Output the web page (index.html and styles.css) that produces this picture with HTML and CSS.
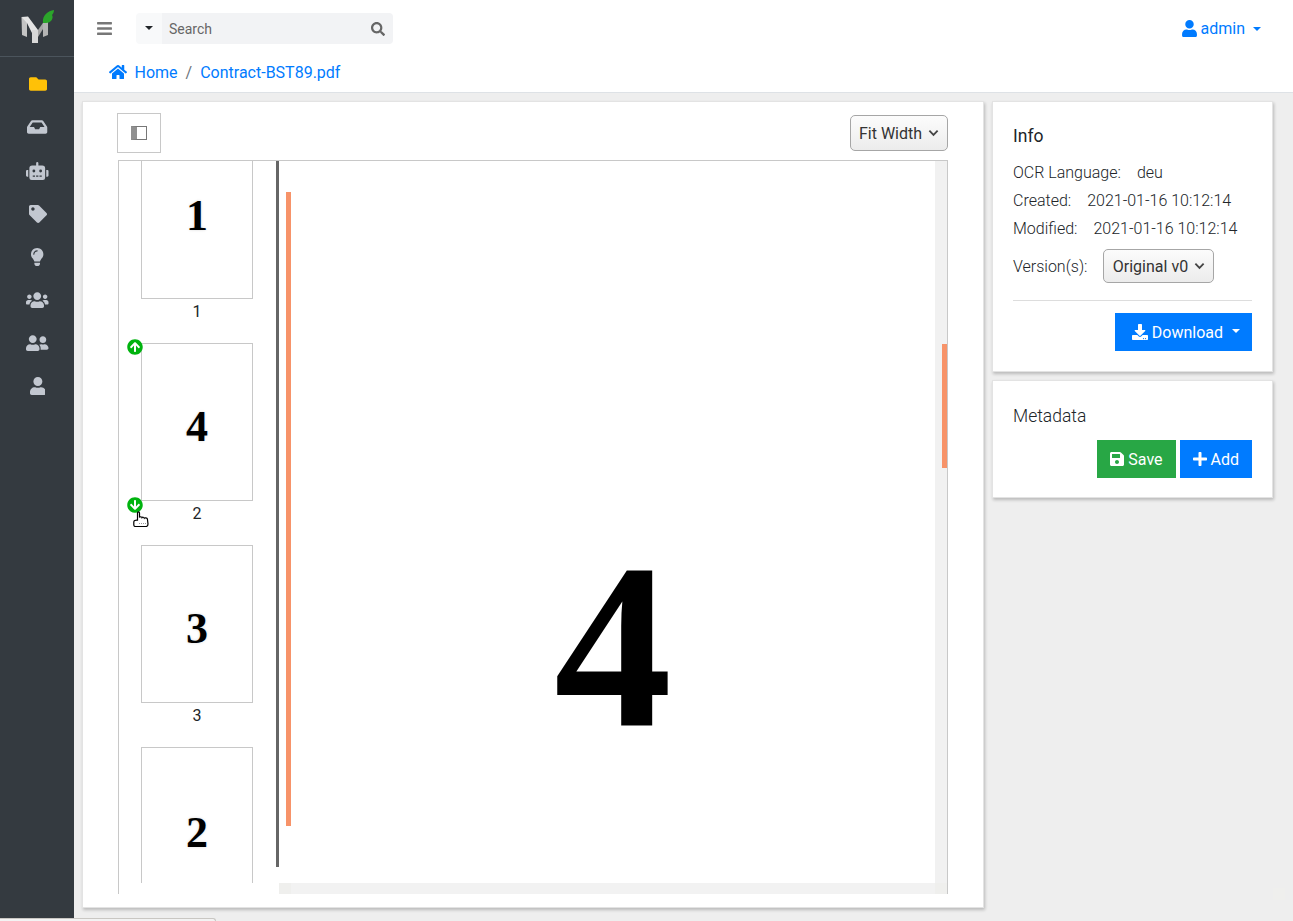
FILE: index.html
```html
<!DOCTYPE html>
<html>
<head>
    <meta name="viewport" content="width=device-width, initial-scale=1.0">
    <title>Contract-BST89.pdf</title>
    <link rel="stylesheet" href="styles.css">
</head>
<body>
    <div class="app">
        <aside class="sidebar">
            <div class="brand">
                <svg class="logo" viewBox="0 0 33 34" width="33" height="34">
                    <polygon points="0.5,8 6,11 6,28 1,26" fill="#c4c4c4"/>
                    <polygon points="0.5,8 7,7.5 17,21 11,24 6,14" fill="#e4e4e4"/>
                    <polygon points="11,21 17,21 17,34 11,34" fill="#d8d8d8"/>
                    <polygon points="17,21 24,11 27,12 17,28" fill="#a6a6a6"/>
                    <polygon points="22,13 27,12 27,26 22,28" fill="#b4b4b4"/>
                    <path d="M22 14 C21 6 27 2 33 1 C33 3 32 5 31 6 C33 9 30 14 25 14 Z" fill="#2ba52a"/>
                </svg>
            </div>
            <nav class="side-nav">
                <a class="active"><svg viewBox="0 0 512 512"><path d="M464 128H272l-64-64H48C21.49 64 0 85.49 0 112v288c0 26.51 21.49 48 48 48h416c26.51 0 48-21.49 48-48V176c0-26.51-21.49-48-48-48z"/></svg></a>
                <a><svg viewBox="0 0 576 512"><path d="M567.938 243.908L462.25 85.374A48.003 48.003 0 0 0 422.311 64H153.689a48 48 0 0 0-39.938 21.374L8.062 243.908A47.994 47.994 0 0 0 0 270.533V400c0 26.51 21.49 48 48 48h480c26.51 0 48-21.49 48-48V270.533a47.994 47.994 0 0 0-8.062-26.625zM162.252 128h251.497l85.333 128H376l-32 64H232l-32-64H76.918l85.334-128z"/></svg></a>
                <a><svg viewBox="0 0 640 512"><path d="M32,224H64V416H32A31.96166,31.96166,0,0,1,0,384V256A31.96166,31.96166,0,0,1,32,224Zm512-48V448a64.06328,64.06328,0,0,1-64,64H160a64.06328,64.06328,0,0,1-64-64V176a79.974,79.974,0,0,1,80-80H288V32a32,32,0,0,1,64,0V96H464A79.974,79.974,0,0,1,544,176ZM264,256a40,40,0,1,0-40,40A39.997,39.997,0,0,0,264,256Zm-8,128H192v32h64Zm96,0H288v32h64ZM456,256a40,40,0,1,0-40,40A39.997,39.997,0,0,0,456,256Zm-8,128H384v32h64ZM640,256V384a31.96166,31.96166,0,0,1-32,32H576V224h32A31.96166,31.96166,0,0,1,640,256Z"/></svg></a>
                <a><svg viewBox="0 0 512 512"><path d="M0 252.118V48C0 21.49 21.49 0 48 0h204.118a48 48 0 0 1 33.941 14.059l211.882 211.882c18.745 18.745 18.745 49.137 0 67.882L293.823 497.941c-18.745 18.745-49.137 18.745-67.882 0L14.059 286.059A48 48 0 0 1 0 252.118zM112 64c-26.51 0-48 21.49-48 48s21.49 48 48 48 48-21.49 48-48-21.49-48-48-48z"/></svg></a>
                <a><svg viewBox="0 0 352 512"><path d="M96.06 454.35c.01 6.29 1.87 12.45 5.36 17.69l17.09 25.69a31.99 31.99 0 0 0 26.64 14.28h61.71a31.99 31.99 0 0 0 26.64-14.28l17.09-25.69a31.989 31.989 0 0 0 5.36-17.69l.04-38.35H96.01l.05 38.35zM0 176c0 44.37 16.45 84.85 43.56 115.78 16.52 18.85 42.36 58.23 52.21 91.45.04.26.07.52.11.78h160.24c.04-.26.07-.51.11-.78 9.85-33.22 35.69-72.6 52.21-91.45C335.55 260.85 352 220.37 352 176 352 78.61 272.91-.3 175.45 0 73.44.31 0 82.97 0 176zm176-80c-44.11 0-80 35.89-80 80 0 8.84-7.16 16-16 16s-16-7.16-16-16c0-61.76 50.24-112 112-112 8.84 0 16 7.16 16 16s-7.16 16-16 16z"/></svg></a>
                <a><svg viewBox="0 0 640 512"><path d="M96 224c35.3 0 64-28.7 64-64s-28.7-64-64-64-64 28.7-64 64 28.7 64 64 64zm448 0c35.3 0 64-28.7 64-64s-28.7-64-64-64-64 28.7-64 64 28.7 64 64 64zm32 32h-64c-17.6 0-33.5 7.1-45.1 18.6 40.3 22.1 68.9 62 75.1 109.4h66c17.7 0 32-14.3 32-32v-32c0-35.3-28.7-64-64-64zm-256 0c61.9 0 112-50.1 112-112S381.9 32 320 32 208 82.1 208 144s50.1 112 112 112zm76.8 32h-8.3c-20.8 10-43.9 16-68.5 16s-47.6-6-68.5-16h-8.3C179.6 288 128 339.6 128 403.2V432c0 26.5 21.5 48 48 48h288c26.5 0 48-21.5 48-48v-28.8c0-63.6-51.6-115.2-115.2-115.2zm-223.7-13.4C161.5 263.1 145.6 256 128 256H64c-35.3 0-64 28.7-64 64v32c0 17.7 14.3 32 32 32h65.9c6.3-47.4 34.9-87.3 75.2-109.4z"/></svg></a>
                <a><svg viewBox="0 0 640 512"><path d="M192 256c61.9 0 112-50.1 112-112S253.9 32 192 32 80 82.1 80 144s50.1 112 112 112zm76.8 32h-8.3c-20.8 10-43.9 16-68.5 16s-47.6-6-68.5-16h-8.3C51.6 288 0 339.6 0 403.2V432c0 26.5 21.5 48 48 48h288c26.5 0 48-21.5 48-48v-28.8c0-63.6-51.6-115.2-115.2-115.2zM480 256c53 0 96-43 96-96s-43-96-96-96-96 43-96 96 43 96 96 96zm48 32h-3.8c-13.9 4.8-28.6 8-44.2 8s-30.3-3.2-44.2-8H432c-20.4 0-39.2 5.9-55.7 15.4 24.4 26.3 39.7 61.2 39.7 99.8v38.4c0 2.2-.5 4.3-.6 6.4H592c26.5 0 48-21.5 48-48 0-61.9-50.1-112-112-112z"/></svg></a>
                <a><svg viewBox="0 0 448 512"><path d="M224 256c70.7 0 128-57.3 128-128S294.7 0 224 0 96 57.3 96 128s57.3 128 128 128zm89.6 32h-16.7c-22.2 10.2-46.9 16-72.9 16s-50.6-5.8-72.9-16h-16.7C60.2 288 0 348.2 0 422.4V464c0 26.5 21.5 48 48 48h352c26.5 0 48-21.5 48-48v-41.6c0-74.2-60.2-134.4-134.4-134.4z"/></svg></a>
            </nav>
        </aside>

        <div class="page">
            <header class="topbar">
                <div class="topbar-row">
                    <svg class="menu-icon" viewBox="0 0 448 512"><path d="M16 132h416c8.837 0 16-7.163 16-16V76c0-8.837-7.163-16-16-16H16C7.163 60 0 67.163 0 76v40c0 8.837 7.163 16 16 16zm0 160h416c8.837 0 16-7.163 16-16v-40c0-8.837-7.163-16-16-16H16c-8.837 0-16 7.163-16 16v40c0 8.837 7.163 16 16 16zm0 160h416c8.837 0 16-7.163 16-16v-40c0-8.837-7.163-16-16-16H16c-8.837 0-16 7.163-16 16v40c0 8.837 7.163 16 16 16z"/></svg>
                    <div class="search">
                        <div class="search-drop"><span class="caret caret-dark"></span></div>
                        <div class="search-input">
                            <span>Search</span>
                            <svg viewBox="0 0 512 512"><path d="M505 442.7L405.3 343c-4.5-4.5-10.6-7-17-7H372c27.6-35.3 44-79.7 44-128C416 93.1 322.9 0 208 0S0 93.1 0 208s93.1 208 208 208c48.3 0 92.7-16.4 128-44v16.3c0 6.4 2.5 12.5 7 17l99.7 99.7c9.4 9.4 24.6 9.4 33.9 0l28.3-28.3c9.4-9.4 9.4-24.6.1-34zM208 336c-70.7 0-128-57.2-128-128 0-70.7 57.2-128 128-128 70.7 0 128 57.2 128 128 0 70.7-57.2 128-128 128z"/></svg>
                        </div>
                    </div>
                    <a class="user-menu">
                        <svg viewBox="0 0 448 512"><path d="M224 256c70.7 0 128-57.3 128-128S294.7 0 224 0 96 57.3 96 128s57.3 128 128 128zm89.6 32h-16.7c-22.2 10.2-46.9 16-72.9 16s-50.6-5.8-72.9-16h-16.7C60.2 288 0 348.2 0 422.4V464c0 26.5 21.5 48 48 48h352c26.5 0 48-21.5 48-48v-41.6c0-74.2-60.2-134.4-134.4-134.4z"/></svg>
                        <span>admin</span>
                        <span class="caret"></span>
                    </a>
                </div>
                <div class="breadcrumb">
                    <svg viewBox="0 0 576 512"><path d="M280.37 148.26L96 300.11V464a16 16 0 0 0 16 16l112.06-.29a16 16 0 0 0 15.92-16V368a16 16 0 0 1 16-16h64a16 16 0 0 1 16 16v95.64a16 16 0 0 0 16 16.05L464 480a16 16 0 0 0 16-16V300L295.67 148.26a12.19 12.19 0 0 0-15.3 0zM571.6 251.47L488 182.56V44.05a12 12 0 0 0-12-12h-56a12 12 0 0 0-12 12v72.61L318.47 43a48 48 0 0 0-61 0L4.34 251.47a12 12 0 0 0-1.6 16.9l25.5 31A12 12 0 0 0 45.15 301l235.22-193.74a12.19 12.19 0 0 1 15.3 0L530.9 301a12 12 0 0 0 16.9-1.6l25.5-31a12 12 0 0 0-1.7-16.93z"/></svg>
                    <a>Home</a>
                    <span class="crumb-sep">/</span>
                    <a>Contract-BST89.pdf</a>
                </div>
            </header>

            <main class="content">
                <section class="card doc-card">
                    <div class="doc-toolbar">
                        <button class="sidebar-toggle"><span class="toggle-glyph"></span></button>
                        <div class="select-box fit-select">Fit Width <svg class="chevron" viewBox="0 0 12 8"><path d="M1.5 1.5 L6 6 L10.5 1.5" /></svg></div>
                    </div>
                    <div class="viewer">
                        <div class="thumbs">
                            <div class="thumb thumb-first">
                                <div class="thumb-page">1</div>
                                <div class="thumb-label">1</div>
                            </div>
                            <div class="thumb">
                                <div class="thumb-page">4</div>
                                <div class="thumb-label">2</div>
                                <svg class="move-badge move-up" viewBox="0 0 512 512"><path d="M8 256C8 119 119 8 256 8s248 111 248 248-111 248-248 248S8 393 8 256zm143.6 28.9l72.4-75.5V392c0 13.3 10.7 24 24 24h16c13.3 0 24-10.7 24-24V209.4l72.4 75.5c9.3 9.7 24.8 9.9 34.3.4l10.9-11c9.4-9.4 9.4-24.6 0-33.9L273 107.7c-9.4-9.4-24.6-9.4-33.9 0L106.3 240.4c-9.4 9.4-9.4 24.6 0 33.9l10.9 11c9.6 9.5 25.1 9.3 34.4-.4z"/></svg>
                                <svg class="move-badge move-down" viewBox="0 0 512 512"><path d="M504 256c0 137-111 248-248 248S8 393 8 256 119 8 256 8s248 111 248 248zM360.4 227.1L288 302.6V120c0-13.3-10.7-24-24-24h-16c-13.3 0-24 10.7-24 24v182.6l-72.4-75.5c-9.3-9.7-24.8-9.9-34.3-.4l-10.9 11c-9.4 9.4-9.4 24.6 0 33.9L239 404.3c9.4 9.4 24.6 9.4 33.9 0l132.7-132.7c9.4-9.4 9.4-24.6 0-33.9l-10.9-11c-9.5-9.5-25-9.3-34.3.4z"/></svg>
                                <svg class="hand-cursor" viewBox="0 0 16 16"><path d="M4.5 2 C4.5 .6 6.5 .6 6.5 2 V6.5 C7 5.5 8.7 5.5 9 6.7 C9.5 6 11 6 11.3 7.2 C11.8 6.6 14 6.6 14.4 8 L15 13 C15 14.5 14 15.5 13 15.5 H2.5 C1.5 15.5 .8 15 .8 14 V11 C.8 9.8 2 9 4.5 9.2 Z" fill="#fff" stroke="#000" stroke-width="1.2"/><path d="M6 12.5 H13" stroke="#999" stroke-width="1" stroke-dasharray="1 1"/></svg>
                            </div>
                            <div class="thumb">
                                <div class="thumb-page">3</div>
                                <div class="thumb-label">3</div>
                            </div>
                            <div class="thumb thumb-last">
                                <div class="thumb-page">2</div>
                            </div>
                        </div>
                        <div class="page-view">
                            <div class="page-scroll">
                                <div class="page-sheet">
                                    <div class="sheet-mark"></div>
                                    <div class="sheet-digit">4</div>
                                </div>
                                <div class="v-track"><div class="v-thumb"></div></div>
                            </div>
                            <div class="h-track"><div class="h-thumb"></div><div class="h-corner"></div></div>
                        </div>
                    </div>
                </section>

                <div class="side-col">
                    <section class="card info-card">
                        <h3 class="card-title">Info</h3>
                        <p class="info-row"><span>OCR Language:</span><span>deu</span></p>
                        <p class="info-row"><span>Created:</span><span>2021-01-16 10:12:14</span></p>
                        <p class="info-row"><span>Modified:</span><span>2021-01-16 10:12:14</span></p>
                        <div class="info-row version-row">
                            <span>Version(s):</span>
                            <div class="select-box version-select">Original v0 <svg class="chevron" viewBox="0 0 12 8"><path d="M1.5 1.5 L6 6 L10.5 1.5" /></svg></div>
                        </div>
                        <hr class="divider">
                        <div class="btn-row">
                            <button class="btn btn-blue btn-download">
                                <svg viewBox="0 0 512 512"><path d="M216 0h80c13.3 0 24 10.7 24 24v168h87.7c17.8 0 26.7 21.5 14.1 34.1L269.7 378.3c-7.5 7.5-19.8 7.5-27.3 0L90.1 226.1c-12.6-12.6-3.7-34.1 14.1-34.1H192V24c0-13.3 10.7-24 24-24zm296 376v112c0 13.3-10.7 24-24 24H24c-13.3 0-24-10.7-24-24V376c0-13.3 10.7-24 24-24h146.7l49 49c20.1 20.1 52.5 20.1 72.6 0l49-49H488c13.3 0 24 10.7 24 24zm-124 88c0-11-9-20-20-20s-20 9-20 20 9 20 20 20 20-9 20-20zm64 0c0-11-9-20-20-20s-20 9-20 20 9 20 20 20 20-9 20-20z"/></svg>
                                Download <span class="caret caret-white"></span>
                            </button>
                        </div>
                    </section>

                    <section class="card meta-card">
                        <h3 class="card-title light">Metadata</h3>
                        <div class="btn-row">
                            <button class="btn btn-green">
                                <svg viewBox="0 0 448 512"><path d="M433.941 129.941l-83.882-83.882A48 48 0 0 0 316.118 32H48C21.49 32 0 53.49 0 80v352c0 26.51 21.49 48 48 48h352c26.51 0 48-21.49 48-48V163.882a48 48 0 0 0-14.059-33.941zM224 416c-35.346 0-64-28.654-64-64 0-35.346 28.654-64 64-64s64 28.654 64 64c0 35.346-28.654 64-64 64zm96-304.52V212c0 6.627-5.373 12-12 12H76c-6.627 0-12-5.373-12-12V108c0-6.627 5.373-12 12-12h228.52c3.183 0 6.235 1.264 8.485 3.515l3.48 3.48A11.996 11.996 0 0 1 320 111.48z"/></svg>
                                Save
                            </button>
                            <button class="btn btn-blue">
                                <svg viewBox="0 0 448 512"><path d="M416 208H272V64c0-17.67-14.33-32-32-32h-32c-17.67 0-32 14.33-32 32v144H32c-17.67 0-32 14.33-32 32v32c0 17.67 14.33 32 32 32h144v144c0 17.67 14.33 32 32 32h32c17.67 0 32-14.33 32-32V304h144c17.67 0 32-14.33 32-32v-32c0-17.67-14.33-32-32-32z"/></svg>
                                Add
                            </button>
                        </div>
                    </section>
                </div>
            </main>
        </div>
    </div>
    <div class="bottom-tab"></div>
    <div class="corner-mark"></div>
</body>
</html>
```

FILE: styles.css
```css
html, body {
    height: 100%;
}

body {
    margin: 0;
    overflow: hidden;
    font-family: Roboto, "Liberation Sans", sans-serif;
    font-size: 16px;
    color: #212529;
    background-color: #eeeeee;
}

.app {
    display: flex;
    height: 921px;
}

/* left icon bar */
.sidebar {
    flex: 0 0 74px;
    height: 918px;
    background-color: #343a40;
}

.brand {
    display: flex;
    justify-content: center;
    align-items: center;
    height: 56px;
    border-bottom: 1px solid #4b545c;
}

.logo {
    margin-left: 1px;
    margin-top: -4px;
}

.side-nav {
    display: flex;
    flex-direction: column;
    padding-top: 5.8px;
    padding-left: 1px;
}

.side-nav a {
    display: flex;
    justify-content: center;
    align-items: center;
    height: 43.12px;
}

.side-nav svg {
    height: 18px;
    max-width: 23px;
    fill: #c2c7d0;
}

.side-nav a.active svg {
    fill: #ffc107;
}

.page {
    flex: 1;
    min-width: 0;
}

/* top header */
.topbar {
    height: 92px;
    background-color: #fff;
    border-bottom: 1px solid #dee2e6;
}

.topbar-row {
    display: flex;
    align-items: center;
    height: 57px;
    padding-left: 23px;
    padding-right: 32px;
}

.menu-icon {
    width: 15px;
    height: 17px;
    fill: #777;
    margin-right: 24px;
}

.search {
    display: flex;
    width: 257px;
    height: 31px;
    border-radius: 4px;
    overflow: hidden;
}

.search-drop {
    display: flex;
    justify-content: center;
    align-items: center;
    width: 26px;
    background-color: #f8f9fa;
}

.search-input {
    flex: 1;
    display: flex;
    align-items: center;
    justify-content: space-between;
    padding: 0 8px 0 7px;
    background-color: #f2f3f5;
    color: #666;
    font-size: 14px;
}

.search-input svg {
    width: 14px;
    height: 14px;
    fill: #666;
}

.caret {
    display: inline-block;
    width: 0;
    height: 0;
    border-top: 4.8px solid #007bff;
    border-left: 4.8px solid transparent;
    border-right: 4.8px solid transparent;
}

.caret-dark {
    border-top-color: #212529;
    border-width: 4.5px 4px 0 4px;
    margin-top: -2px;
}

.caret-white {
    border-top-color: #fff;
    margin-left: 9px;
    margin-bottom: 2px;
}

.user-menu {
    margin-left: auto;
    display: flex;
    align-items: center;
    color: #007bff;
}

.user-menu svg {
    width: 15px;
    height: 17px;
    fill: #007bff;
    margin-right: 4px;
}

.user-menu .caret {
    margin-left: 8px;
}

.breadcrumb {
    display: flex;
    align-items: center;
    padding-left: 35px;
    height: 30px;
    color: #007bff;
}

.breadcrumb svg {
    width: 18px;
    height: 16px;
    fill: #007bff;
    margin-right: 7.5px;
}

.crumb-sep {
    color: #6c757d;
    padding: 0 8px;
}

/* page body */
.content {
    display: flex;
    align-items: flex-start;
    padding: 8px 0 0 8px;
}

.card {
    background-color: #fff;
    border: 1px solid #e3e3e3;
    box-shadow: 1px 2px 3px rgba(0, 0, 0, 0.22);
    box-sizing: border-box;
}

.doc-card {
    width: 902px;
    height: 807px;
    padding: 11px 34px 0 34px;
}

.doc-toolbar {
    display: flex;
    justify-content: space-between;
    align-items: flex-start;
    height: 47px;
    padding-right: 1px;
}

.sidebar-toggle {
    width: 44px;
    height: 40px;
    padding: 0;
    background-color: #fff;
    border: 1px solid #c8c8c8;
    display: flex;
    justify-content: center;
    align-items: center;
}

.toggle-glyph {
    display: block;
    box-sizing: border-box;
    width: 16px;
    height: 14px;
    border: 1px solid #777;
    border-left: 6px solid #909090;
    background-color: #fff;
}

.select-box {
    display: flex;
    align-items: center;
    justify-content: center;
    box-sizing: border-box;
    border: 1px solid #a6a6a6;
    border-radius: 5px;
    background: linear-gradient(#fcfcfc, #ececec);
    color: #333;
}

.chevron {
    width: 11px;
    height: 8px;
    margin-left: 6px;
    fill: none;
    stroke: #444;
    stroke-width: 2;
}

.fit-select {
    width: 98px;
    height: 36px;
    margin-top: 2px;
}

.viewer {
    display: flex;
    width: 830px;
    height: 734px;
    margin-left: 1px;
    box-sizing: border-box;
    border-top: 1px solid #c8c8c8;
    border-left: 1px solid #c8c8c8;
    border-right: 1px solid #c8c8c8;
}

/* thumbnails column */
.thumbs {
    flex: 0 0 157px;
    height: 722px;
    overflow: hidden;
}

.thumb {
    position: relative;
    width: 112px;
    margin-left: 22px;
    height: 202px;
}

.thumb-page {
    box-sizing: border-box;
    display: flex;
    justify-content: center;
    align-items: center;
    width: 112px;
    height: 158px;
    padding-top: 8px;
    border: 1px solid #c8c8c8;
    font-family: "Liberation Serif", serif;
    font-weight: 700;
    font-size: 44px;
    color: #000;
    text-shadow: 0 0 3px rgba(0, 0, 0, 0.15);
}

.thumb-first {
    height: 182px;
}

.thumb-first .thumb-page {
    height: 138px;
    border-top: none;
    padding-top: 0;
    padding-bottom: 29px;
}

.thumb-last .thumb-page {
    border-bottom: none;
    padding-top: 34px;
    height: 136px;
}

.thumb-label {
    text-align: center;
    font-size: 16px;
    line-height: 26px;
}

.move-badge {
    position: absolute;
    left: -14.5px;
    width: 16px;
    height: 16px;
    fill: #00b30f;
}

.move-up {
    top: -4px;
}

.move-down {
    top: 154px;
}

.hand-cursor {
    position: absolute;
    left: -8px;
    top: 168px;
    width: 16px;
    height: 16px;
}

/* page preview */
.page-view {
    flex: 1;
    display: flex;
    flex-direction: column;
    min-width: 0;
}

.page-scroll {
    display: flex;
    height: 722px;
}

.page-sheet {
    position: relative;
    flex: 1;
    height: 706px;
    border-left: 3px solid #666;
}

.sheet-mark {
    position: absolute;
    left: 7px;
    top: 31px;
    width: 5px;
    height: 634px;
    background-color: #f79369;
}

.sheet-digit {
    position: absolute;
    left: 12px;
    right: 0;
    top: 347px;
    text-align: center;
    font-family: "Liberation Serif", serif;
    font-weight: 700;
    font-size: 236px;
    line-height: 276px;
    color: #000;
}

.v-track {
    position: relative;
    flex: 0 0 12px;
    background-color: #f1f1f1;
}

.v-thumb {
    position: absolute;
    right: 0;
    top: 183px;
    width: 5px;
    height: 124px;
    background-color: #f79369;
}

.h-track {
    display: flex;
    justify-content: space-between;
    height: 11px;
    margin-left: 3px;
    background-color: #f2f2f2;
}

.h-thumb,
.h-corner {
    width: 12px;
    background-color: #efefed;
}

/* right column */
.side-col {
    display: flex;
    flex-direction: column;
    gap: 8px;
    width: 281px;
    margin-left: 8px;
}

.info-card {
    height: 271px;
    padding: 24px 20px 0 20px;
}

.meta-card {
    height: 118px;
    padding: 25px 20px 0 20px;
}

.card-title {
    margin: 0;
    font-size: 17.5px;
    font-weight: 400;
    line-height: 20px;
}

.card-title.light {
    font-weight: 300;
}

.info-row {
    display: flex;
    align-items: center;
    gap: 16px;
    margin: 0;
    height: 28px;
    font-weight: 300;
}

.info-card .card-title {
    margin-bottom: 12px;
}

.version-row {
    margin-top: 7px;
    height: 34px;
}

.version-select {
    width: 111px;
    height: 34px;
    font-weight: 400;
}

.divider {
    border: 0;
    border-top: 1px solid #dddddd;
    margin: 17px 0 12px 0;
}

.btn-row {
    display: flex;
    justify-content: flex-end;
    gap: 4px;
}

.meta-card .btn-row {
    margin-top: 14px;
}

.btn {
    display: flex;
    align-items: center;
    height: 38px;
    padding: 0 13px;
    border: 0;
    font-family: inherit;
    font-size: 16px;
    color: #fff;
}

.btn svg {
    height: 16px;
    width: 14px;
    fill: #fff;
    margin-right: 4px;
}

.btn-blue {
    background-color: #007bff;
}

.btn-green {
    background-color: #28a745;
}

.btn-download {
    padding: 0 12px 0 17px;
}

.btn-download svg {
    width: 16px;
}

/* strip at the bottom edge and the faint square in the corner */
.bottom-tab {
    position: fixed;
    left: 0;
    bottom: 0;
    width: 215px;
    height: 2px;
    background-color: #f3f3f3;
    border-top: 1px solid #c9c7c3;
    border-right: 1px solid #c9c7c3;
    border-top-right-radius: 3px;
}

.corner-mark {
    position: fixed;
    left: 1273px;
    top: 888px;
    width: 12px;
    height: 12px;
    background-color: #efefed;
}
```
